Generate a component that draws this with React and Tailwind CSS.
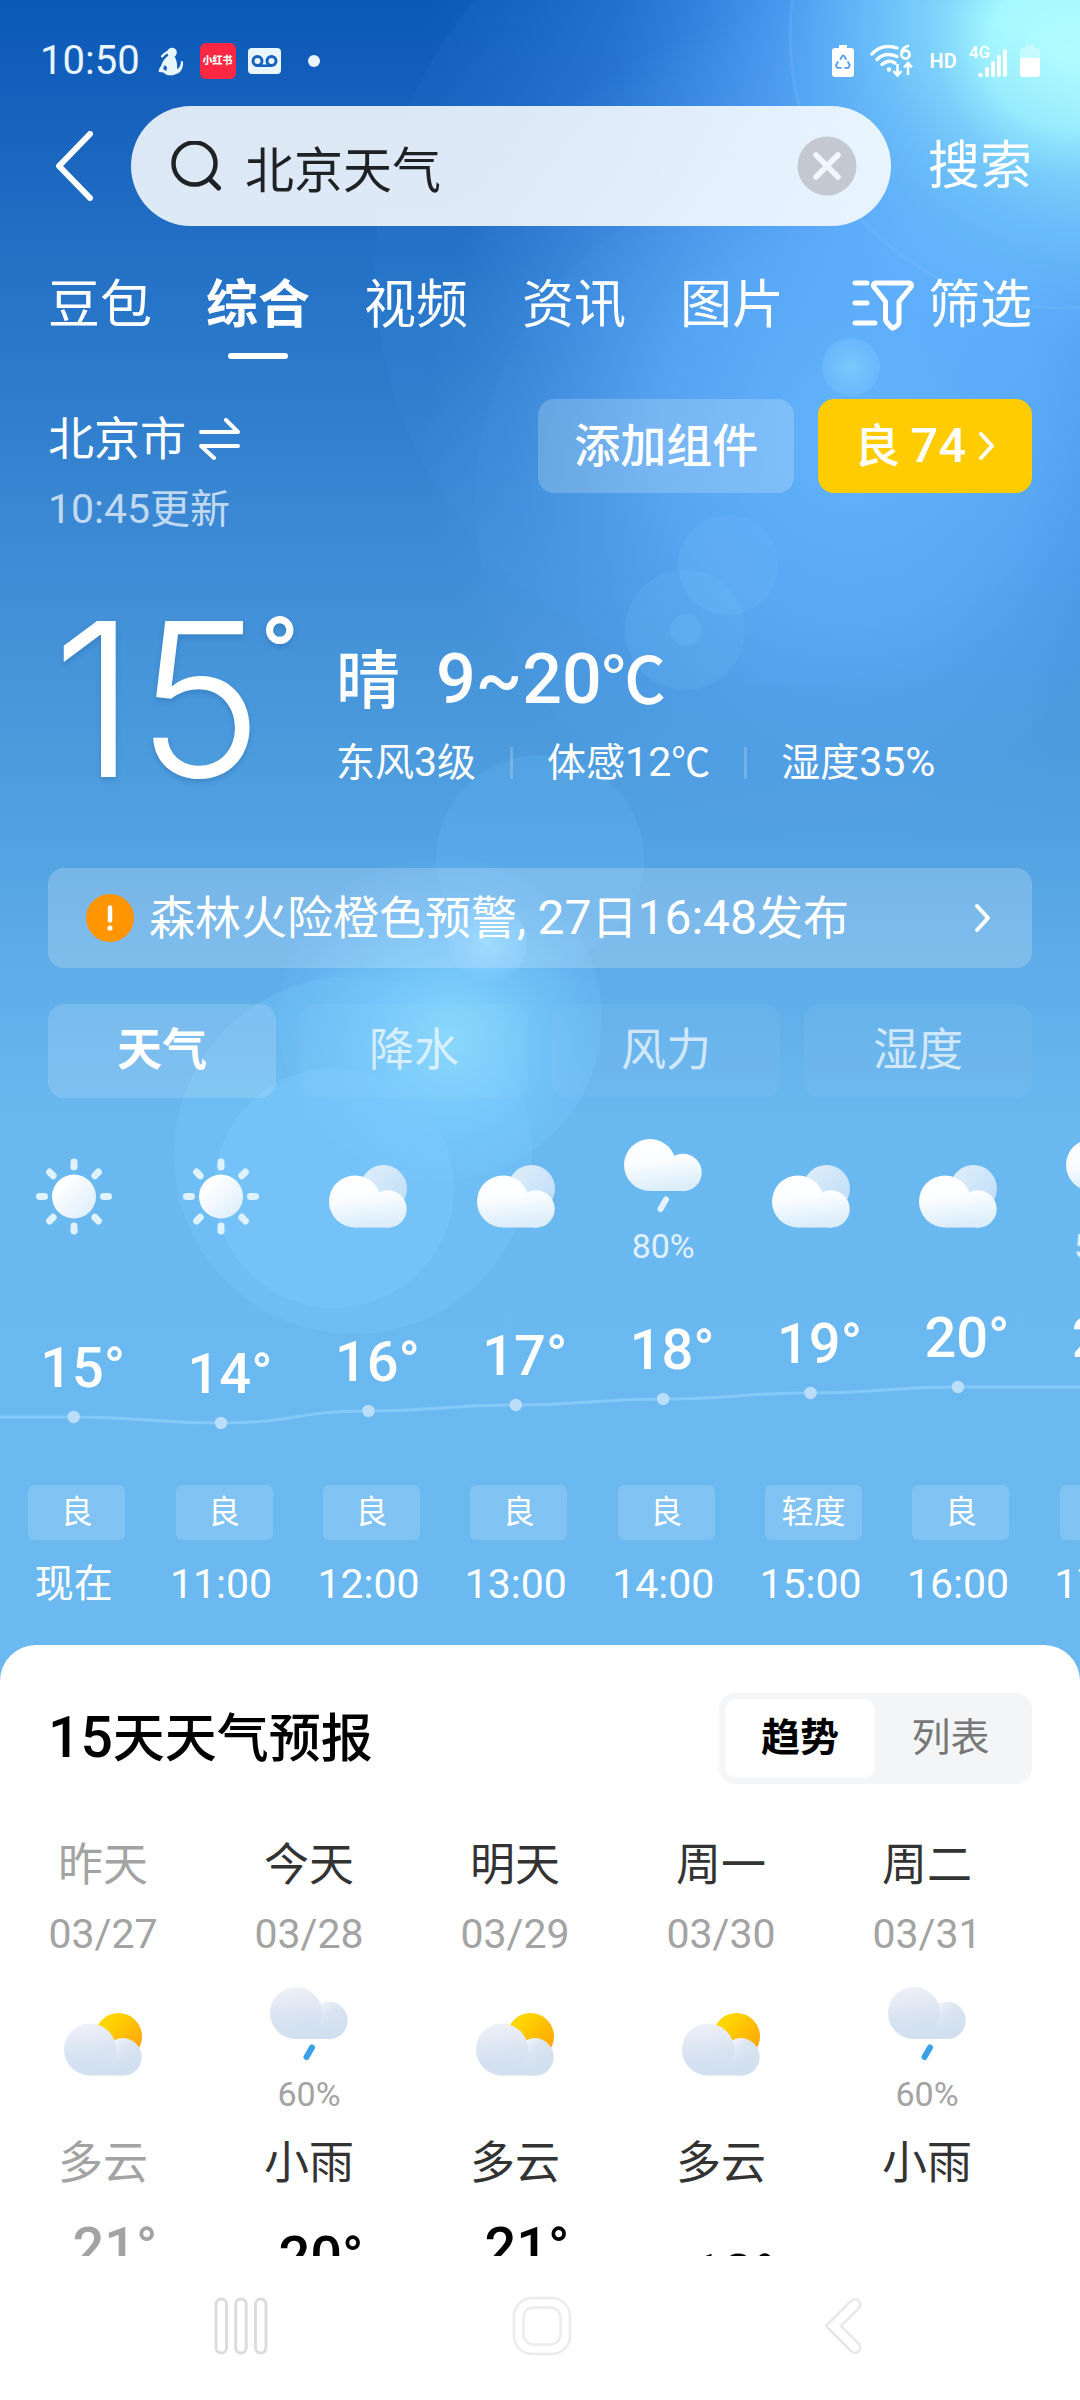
import React from "react";

const hours = [
  { time: "现在", temp: 15, icon: "sun", air: "良" },
  { time: "11:00", temp: 14, icon: "sun", air: "良" },
  { time: "12:00", temp: 16, icon: "cloud", air: "良" },
  { time: "13:00", temp: 17, icon: "cloud", air: "良" },
  { time: "14:00", temp: 18, icon: "rain", rain: "80%", air: "良" },
  { time: "15:00", temp: 19, icon: "cloud", air: "轻度" },
  { time: "16:00", temp: 20, icon: "cloud", air: "良" },
  { time: "17:00", temp: 20, icon: "rain", rain: "50%", air: "良" },
];

const days = [
  { name: "昨天", date: "03/27", icon: "partly", text: "多云", temp: 21, past: true },
  { name: "今天", date: "03/28", icon: "rain", rain: "60%", text: "小雨", temp: 20 },
  { name: "明天", date: "03/29", icon: "partly", text: "多云", temp: 21 },
  { name: "周一", date: "03/30", icon: "partly", text: "多云", temp: 18 },
  { name: "周二", date: "03/31", icon: "rain", rain: "60%", text: "小雨", temp: 16 },
];

function Sky() {
  return (
    <svg
      className="absolute inset-x-0 top-0 w-full"
      viewBox="0 0 1080 1720"
      preserveAspectRatio="xMidYMin slice"
      aria-hidden="true"
    >
      <defs>
        <linearGradient id="sky" x1="0" y1="0" x2="0" y2="1720" gradientUnits="userSpaceOnUse">
          <stop offset="0" stopColor="#0a59b7" />
          <stop offset="0.06" stopColor="#1561bc" />
          <stop offset="0.14" stopColor="#226fc5" />
          <stop offset="0.22" stopColor="#2c7bcb" />
          <stop offset="0.3" stopColor="#3a88d3" />
          <stop offset="0.38" stopColor="#4593d9" />
          <stop offset="0.47" stopColor="#509fdf" />
          <stop offset="0.56" stopColor="#5eace8" />
          <stop offset="0.65" stopColor="#6ab8f0" />
          <stop offset="1" stopColor="#6bb9f0" />
        </linearGradient>
        <radialGradient id="flare" cx="1065" cy="50" r="640" gradientUnits="userSpaceOnUse">
          <stop offset="0" stopColor="#b4ffff" />
          <stop offset="0.12" stopColor="#a8fbff" />
          <stop offset="0.2" stopColor="#88dfff" stopOpacity="0.95" />
          <stop offset="0.32" stopColor="#6dc3ff" stopOpacity="0.9" />
          <stop offset="0.46" stopColor="#58a9ff" stopOpacity="0.75" />
          <stop offset="0.7" stopColor="#4a9cf6" stopOpacity="0.32" />
          <stop offset="1" stopColor="#3c8cf0" stopOpacity="0" />
        </radialGradient>
        <radialGradient id="haze" cx="850" cy="430" r="430" gradientUnits="userSpaceOnUse">
          <stop offset="0" stopColor="#68b7ff" stopOpacity="0.9" />
          <stop offset="0.45" stopColor="#64b4fe" stopOpacity="0.65" />
          <stop offset="0.8" stopColor="#5ba8f4" stopOpacity="0.2" />
          <stop offset="1" stopColor="#5ba8f4" stopOpacity="0" />
        </radialGradient>
        <radialGradient id="glow" cx="450" cy="1040" r="185" gradientUnits="userSpaceOnUse">
          <stop offset="0" stopColor="#8fe0ff" stopOpacity="0.9" />
          <stop offset="0.5" stopColor="#78caff" stopOpacity="0.65" />
          <stop offset="1" stopColor="#70c0ff" stopOpacity="0.05" />
        </radialGradient>
        <radialGradient id="spark">
          <stop offset="0" stopColor="#90dcff" stopOpacity="0.9" />
          <stop offset="1" stopColor="#7cc6ff" stopOpacity="0.55" />
        </radialGradient>
      </defs>
      <rect width="1080" height="1720" fill="url(#sky)" />
      <circle cx="790" cy="270" r="415" fill="#5aa8ff" fillOpacity="0.06" />
      <circle cx="800" cy="500" r="325" fill="#62b0ff" fillOpacity="0.06" />
      <rect width="1080" height="900" fill="url(#flare)" />
      <rect width="1080" height="1000" fill="url(#haze)" />
      <circle cx="1062" cy="36" r="272" fill="#7cc4ff" fillOpacity="0.06" stroke="#8ccaff" strokeOpacity="0.18" strokeWidth="3" />
      <circle cx="851" cy="367" r="29" fill="url(#spark)" fillOpacity="0.65" />
      <circle cx="728" cy="565" r="50" fill="#7cc6ff" fillOpacity="0.17" />
      <circle cx="685" cy="630" r="60" fill="#7cc6ff" fillOpacity="0.15" />
      <circle cx="686" cy="630" r="16" fill="#7cc6ff" fillOpacity="0.22" />
      <circle cx="540" cy="859" r="104" fill="#66b6f6" fillOpacity="0.28" />
      <circle cx="440" cy="1018" r="162" fill="url(#glow)" />
      <circle cx="353" cy="1155" r="179" fill="#7ccbff" fillOpacity="0.26" />
      <circle cx="334" cy="1188" r="120" fill="#7ccaff" fillOpacity="0.4" />
      <circle cx="488" cy="943" r="39" fill="url(#spark)" fillOpacity="0.85" />
    </svg>
  );
}

function CloudShape({ fill }) {
  return (
    <g fill={fill}>
      <circle cx="27" cy="44.5" r="26" />
      <circle cx="60" cy="52" r="18.7" />
      <path d="M27 44h33v26.6H27z" />
    </g>
  );
}

function WeatherIcon({ kind, tone }) {
  const id = React.useId().replace(/[^a-zA-Z0-9]/g, "");
  const dark = tone === "dark";
  const lift = kind === "rain" ? -13.5 : 0;
  if (kind === "sun") {
    return (
      <svg width="80" height="80" viewBox="0 0 80 80" className="mt-[23px]" aria-hidden="true">
        <defs>
          <linearGradient id={id} x1="0" y1="0" x2="1" y2="1">
            <stop offset="0.2" stopColor="#fff" />
            <stop offset="1" stopColor="#d9ecfc" />
          </linearGradient>
        </defs>
        <circle cx="40" cy="39.5" r="22" fill={`url(#${id})`} />
        {[0, 45, 90, 135, 180, 225, 270, 315].map((a) => (
          <rect key={a} x="36.5" y="1.500" width="7" height="12" rx="3.4" fill="#dff2ff" transform={`rotate(${a} 40 39.5)`} />
        ))}
      </svg>
    );
  }
  return (
    <svg
      width="80"
      height="80"
      viewBox="0 0 80 80"
      className={kind === "rain" ? "mt-0" : "mt-[23px]"}
      aria-hidden="true"
    >
      <defs>
        <linearGradient id={id} x1="0" y1="20" x2="6" y2="72" gradientUnits="userSpaceOnUse">
          <stop offset="0" stopColor={dark ? "#f0f1f9" : "#ffffff"} />
          <stop offset={dark ? "0.6" : "0.45"} stopColor={dark ? "#d8e3f1" : "#fbfdff"} />
          <stop offset="1" stopColor={dark ? "#d1dfef" : "#dceefb"} />
        </linearGradient>
        <linearGradient id={`${id}b`} x1="34" y1="12" x2="78" y2="52" gradientUnits="userSpaceOnUse">
          <stop offset="0.2" stopColor={dark ? "#ffd500" : "#d9ebfa"} />
          <stop offset="1" stopColor={dark ? "#ff9d0a" : "#bcdcf7"} />
        </linearGradient>
        <linearGradient id={`${id}c`} x1="50" y1="40" x2="72" y2="50" gradientUnits="userSpaceOnUse">
          <stop offset="0" stopColor="#f2f5fb" stopOpacity="0.95" />
          <stop offset="1" stopColor="#d3e0f0" stopOpacity="0" />
        </linearGradient>
        <linearGradient id={`${id}d`} x1="0" y1="34" x2="0" y2="66" gradientUnits="userSpaceOnUse">
          <stop offset="0" stopColor="#fff" />
          <stop offset="1" stopColor="#000" />
        </linearGradient>
        <mask id={`${id}m`}>
          <rect width="80" height="80" fill={`url(#${id}d)`} />
          <circle cx="27" cy="44.5" r="26" fill="#000" />
        </mask>
      </defs>
      {kind !== "rain" && <circle cx="55.5" cy="31.5" r="23.5" fill={`url(#${id}b)`} />}
      <g transform={`translate(0 ${lift})`}>
        <CloudShape fill={`url(#${id})`} />
        {dark && <circle cx="60" cy="52" r="18.7" fill={`url(#${id}c)`} mask={`url(#${id}m)`} />}
      </g>
      {kind === "rain" && (
        <path d="M43 65.5L37.5 75" stroke={dark ? "#3aa0e8" : "#e3f3ff"} strokeWidth="6" strokeLinecap="round" />
      )}
    </svg>
  );
}

function Chevron({ className }) {
  return (
    <svg width="18" height="30" viewBox="0 0 18 30" fill="none" className={className} aria-hidden="true">
      <path d="M3 3l11 12L3 27" stroke="currentColor" strokeWidth="4" strokeLinecap="round" strokeLinejoin="round" />
    </svg>
  );
}

function StatusBar() {
  return (
    <div className="flex h-[106px] items-center justify-between pt-4 pr-10 pl-10 text-[#e9f5ff]">
      <div className="flex items-center">
        <span className="text-[40px] leading-[48px]">10:50</span>
        <svg width="26" height="30" viewBox="0 0 26 30" className="ml-[18px]" aria-hidden="true">
          <circle cx="14" cy="6.5" r="4.8" fill="currentColor" />
          <path d="M11 5.500C8 6 6 8 4 10.500" stroke="currentColor" strokeWidth="2.2" strokeLinecap="round" fill="none" />
          <path
            d="M10.500 9.500c-3.500 2.500-6 5.500-7 9.500-1 2-3.500 5-2.500 7l4.500.5c2.500 3.500 9.500 3.500 12.500 1.500 5-1 7.500-6 7-12.500l-2-.5c0 4-1.500 7-4 8 .5-5-.5-10-3-13.500z"
            fill="currentColor"
          />
          <path d="M6.500 19l2.500 2-.5 4-3.500-2z" fill="#1561bc" />
        </svg>
        <span className="ml-4 flex size-9 items-center justify-center rounded-md bg-[#ff2741] text-[10px] leading-none font-black text-white">
          小红书
        </span>
        <svg width="33" height="26" viewBox="0 0 33 26" fill="none" className="ml-3" aria-hidden="true">
          <rect width="33" height="26" rx="4" fill="currentColor" />
          <circle cx="9.5" cy="13" r="4.5" stroke="#1561bc" strokeWidth="3" />
          <circle cx="23.5" cy="13" r="4.5" stroke="#1561bc" strokeWidth="3" />
          <path d="M9.5 17.700h14" stroke="#1561bc" strokeWidth="2.6" />
        </svg>
        <span className="ml-[27px] size-3 rounded-full bg-[#e9f5ff]" />
      </div>
      <div className="flex items-center text-white">
        <svg width="22" height="32" viewBox="0 0 22 32" aria-hidden="true">
          <path d="M7 0h8v3h4a3 3 0 013 3v23a3 3 0 01-3 3H3a3 3 0 01-3-3V6a3 3 0 013-3h4z" fill="currentColor" />
          <g fill="none" stroke="#4f9cf5" strokeWidth="1.8" strokeLinecap="round" strokeLinejoin="round">
            <path d="M8.5 14l2-3.4h1.4L14 14" />
            <path d="M16 17l1.8 3.4-1.4 2.4H13" />
            <path d="M9 22.800H5.200L4 20.500 5.800 17" />
          </g>
        </svg>
        <svg width="44" height="34" viewBox="0 0 44 34" fill="none" stroke="currentColor" className="ml-4" aria-hidden="true">
          <path d="M2 10C9 2 19 1 27 4" strokeWidth="3.400" strokeLinecap="round" />
          <path d="M7 15.500c5-5 12-6.500 20-3" strokeWidth="3.400" strokeLinecap="round" />
          <path d="M12 20.500c4-3.500 9-4 13-1.500" strokeWidth="3.400" strokeLinecap="round" />
          <circle cx="19" cy="25.500" r="2.200" fill="currentColor" stroke="none" />
          <path d="M38 2c-4 1-6.500 4-6.500 8" strokeWidth="2.800" strokeLinecap="round" />
          <circle cx="35.500" cy="10.500" r="4" strokeWidth="2.800" />
          <path d="M27.500 20v11m-4-4l4 4.500 4-4.500M38 31V19m-4 4.500l4-4.500 4 4.500" strokeWidth="2.600" />
        </svg>
        <span className="ml-4 text-[20px] leading-none font-semibold">HD</span>
        <span className="ml-3 self-start text-[17px] leading-none font-semibold">4G</span>
        <svg width="30" height="30" viewBox="0 0 30 30" fill="currentColor" className="-ml-3 mt-1" aria-hidden="true">
          <circle cx="2.500" cy="27" r="2.200" />
          <rect x="7" y="19" width="4" height="10" rx="2" />
          <rect x="13" y="13" width="4" height="16" rx="2" />
          <rect x="19" y="7" width="4" height="22" rx="2" />
          <rect x="25" y="1" width="4" height="28" rx="2" />
        </svg>
        <svg width="20" height="32" viewBox="0 0 20 32" className="ml-3" aria-hidden="true">
          <path d="M6 0h8v3h3a3 3 0 013 3v7H0V6a3 3 0 013-3h3z" fill="currentColor" fillOpacity="0.35" />
          <path d="M0 13h20v16a3 3 0 01-3 3H3a3 3 0 01-3-3z" fill="currentColor" />
        </svg>
      </div>
    </div>
  );
}

function SearchRow() {
  return (
    <form className="flex h-[120px] items-center gap-[37px] pr-12 pl-14" onSubmit={(e) => e.preventDefault()}>
      <button type="button" aria-label="返回" className="shrink-0 text-white">
        <svg width="38" height="70" viewBox="0 0 38 70" fill="none" aria-hidden="true">
          <path d="M34 3L3 35l31 32" stroke="currentColor" strokeWidth="6" strokeLinecap="round" strokeLinejoin="round" />
        </svg>
      </button>
      <div className="flex h-full min-w-0 flex-1 items-center rounded-full bg-white/85 pr-[34px] pl-10">
        <svg width="50" height="50" viewBox="0 0 50 50" fill="none" stroke="#1f2225" className="shrink-0" aria-hidden="true">
          <circle cx="23.500" cy="22.500" r="21" strokeWidth="4.500" />
          <path d="M39 38.500l8.500 8.500" strokeWidth="5" strokeLinecap="round" />
        </svg>
        <input
          aria-label="搜索内容"
          defaultValue="北京天气"
          className="ml-6 h-full min-w-0 flex-1 bg-transparent text-[49px] leading-[60px] text-[#1f2225] outline-none"
        />
        <button type="button" aria-label="清除" className="shrink-0">
          <svg width="60" height="60" viewBox="0 0 60 60" fill="none" aria-hidden="true">
            <circle cx="30" cy="30" r="29.500" fill="#c3c8d1" />
            <path d="M19 19l22 22M41 19L19 41" stroke="#f0f7ff" strokeWidth="5.500" strokeLinecap="round" />
          </svg>
        </button>
      </div>
      <button type="submit" className="shrink-0 pt-0.5 text-[52px] leading-[60px] text-white">搜索</button>
    </form>
  );
}

function Tabs() {
  const tabs = ["豆包", "综合", "视频", "资讯", "图片"];
  return (
    <nav className="flex items-start justify-between px-12 pt-[50px] text-[52px] leading-[60px] text-white">
      <div className="flex gap-[54px]">
        {tabs.map((t) => (
          <button key={t} type="button" className="flex flex-col items-center gap-[17px]">
            <span className={t === "综合" ? "font-bold" : "font-normal"}>{t}</span>
            <span className={t === "综合" ? "h-1.5 w-[60px] rounded-full bg-white" : "h-1.5 w-[60px]"} />
          </button>
        ))}
      </div>
      <button type="button" className="flex items-center gap-[14px]">
        <svg width="62" height="52" viewBox="0 0 62 52" fill="none" stroke="currentColor" strokeWidth="5" strokeLinecap="round" strokeLinejoin="round" aria-hidden="true">
          <path d="M3 3h12M3 23h12M3 43h20" />
          <path d="M24 3h33c2.500 0 3 2.500 2 4L47 21.500V42c0 2-1 3-2.500 4l-3 1.800c-1 .5-2 0-2.500-.8L34.500 42c-.8-1-1-2-1-3V21.500L22 7c-1.200-1.500-.5-4 2-4z" />
        </svg>
        筛选
      </button>
    </nav>
  );
}

function Current() {
  return (
    <section className="px-12 text-white">
      <div className="mt-10 flex items-start justify-between">
        <div className="pt-3">
          <button type="button" className="flex items-center gap-[13px] text-[46px] leading-[56px]">
            北京市
            <svg width="41" height="42" viewBox="0 0 41 42" fill="none" stroke="currentColor" strokeWidth="4" strokeLinecap="round" strokeLinejoin="round" aria-hidden="true">
              <path d="M2 14h37L27 2M39 28H2l13 12" />
            </svg>
          </button>
          <p className="mt-4 text-[40px] leading-[52px] text-white/70">
            <span className="text-[41px]">10:45</span>更新
          </p>
        </div>
        <div className="flex gap-6 text-[46px] font-medium">
          <button type="button" className="h-[94px] rounded-2xl bg-white/20 px-9">添加组件</button>
          <button type="button" className="flex h-[94px] items-center rounded-2xl bg-[#fecc00] px-9">
            <span>良</span>
            <span className="ml-2.5 text-[49px]">74</span>
            <Chevron className="ml-3" />
          </button>
        </div>
      </div>

      <div className="mt-[86px] flex items-start">
        <p className="flex w-[288px] shrink-0 items-start pl-1 font-['Inter'] text-[214px] leading-[156px] font-light whitespace-nowrap [text-shadow:0_3px_5px_rgba(30,90,150,0.3)]">
          15
          <span className="-ml-1 font-['Roboto'] text-[107px] leading-[72px] font-medium">°</span>
        </p>
        <div className="pt-[17px]">
          <p className="flex items-baseline gap-9 text-[64px] leading-[80px] font-medium">
            <span>晴</span>
            <span><span className="text-[70px]">9~20</span>℃</span>
          </p>
          <ul className="mt-4 flex items-center gap-[34px] text-[39px] leading-[48px]">
            <li>东风<span className="text-[41px]">3</span>级</li>
            <li aria-hidden="true" className="h-8 w-[3px] bg-white/20" />
            <li>体感<span className="text-[41px]">12</span>℃</li>
            <li aria-hidden="true" className="h-8 w-[3px] bg-white/20" />
            <li>湿度<span className="text-[41px]">35%</span></li>
          </ul>
        </div>
      </div>

      <a href="#alert" className="mt-[81px] flex h-[100px] items-center rounded-2xl bg-white/20 pr-10 pl-[38px] text-[46px] leading-[56px]">
        <span className="flex size-12 shrink-0 items-center justify-center rounded-full bg-[#ff9500]">
          <svg width="8" height="26" viewBox="0 0 8 26" fill="none" aria-hidden="true">
            <path d="M4 2.500v13" stroke="#fff" strokeWidth="4.500" strokeLinecap="round" />
            <circle cx="4" cy="23" r="2.600" fill="#fff" />
          </svg>
        </span>
        <span className="ml-[15px] flex-1">
          森林火险橙色预警, <span className="text-[48px]">27</span>日<span className="text-[48px]">16:48</span>发布
        </span>
        <Chevron />
      </a>

      <div className="mt-9 grid grid-cols-4 gap-6 text-[45px]">
        {["天气", "降水", "风力", "湿度"].map((t, i) => (
          <button
            key={t}
            type="button"
            className={
              i === 0
                ? "h-[94px] rounded-2xl bg-white/15 font-bold text-white"
                : "h-[94px] rounded-2xl bg-white/[0.04] text-white/70"
            }
          >
            {t}
          </button>
        ))}
      </div>
    </section>
  );
}

const HOUR_W = 1179 / 8;
const dotY = (t) => 119 + (20 - t) * 6;

function trendPath() {
  const pts = hours.map((h, i) => [HOUR_W * (i + 0.5), dotY(h.temp)]);
  let d = `M0 ${pts[0][1]}L${pts[0][0]} ${pts[0][1]}`;
  for (let i = 1; i < pts.length; i++) {
    const mid = (pts[i - 1][0] + pts[i][0]) / 2;
    d += `C${mid} ${pts[i - 1][1]} ${mid} ${pts[i][1]} ${pts[i][0]} ${pts[i][1]}`;
  }
  return d;
}

function Hourly() {
  return (
    <section className="overflow-hidden pt-9 pb-[37px] text-white">
      <div className="relative w-[1179px]">
        <svg className="absolute top-[134px] left-0 h-[217px] w-full" viewBox="0 0 1179 217" fill="none" aria-hidden="true">
          <path d={trendPath()} stroke="#84c9f8" strokeWidth="3" />
          {hours.map((h, i) => (
            <circle key={h.time} cx={HOUR_W * (i + 0.5)} cy={dotY(h.temp)} r="6.200" fill="#badefa" />
          ))}
        </svg>
        <ol className="relative grid grid-cols-8">
          {hours.map((h) => (
            <li key={h.time} className="flex flex-col items-center">
              <div className="flex h-[134px] flex-col items-center">
                <WeatherIcon kind={h.icon} tone="light" />
                {h.rain && <span className="mt-3 text-[34px] leading-[40px] text-white/80">{h.rain}</span>}
              </div>
              <div className="h-[217px]">
                <p
                  className="pl-[18px] text-[56px] leading-[60px] font-medium"
                  style={{ marginTop: 40 + (20 - h.temp) * 6 }}
                >
                  {h.temp}°
                </p>
              </div>
              <span className="ml-1.5 flex h-[55px] w-[97px] items-center justify-center rounded-md bg-white/15 text-[32px] leading-[51px]">
                {h.air}
              </span>
              <span className={h.time === "现在" ? "mt-5 text-[39px] leading-[48px]" : "mt-5 text-[41px] leading-[48px]"}>
                {h.time}
              </span>
            </li>
          ))}
        </ol>
      </div>
    </section>
  );
}

function Forecast() {
  return (
    <section className="relative rounded-t-[36px] bg-white pt-12">
      <div className="flex items-center justify-between px-12">
        <h2 className="text-[52px] leading-[64px] font-medium text-black">
          <span className="text-[57px]">15</span>天天气预报
        </h2>
        <div className="flex h-[91px] rounded-2xl bg-[#f4f5f7] p-1.5 text-[39px]">
          <button type="button" className="w-[150px] rounded-xl bg-white font-bold text-black">趋势</button>
          <button type="button" className="w-[151px] text-[#777777]">列表</button>
        </div>
      </div>
      <ol className="mt-[54px] flex">
        {days.map((d) => (
          <li
            key={d.date}
            className={
              d.past
                ? "flex w-[206px] shrink-0 flex-col items-center text-[#a3a3a3]"
                : "flex w-[206px] shrink-0 flex-col items-center text-[#333333]"
            }
          >
            <span className="text-[45px] leading-[56px]">{d.name}</span>
            <span className="mt-4 text-[41px] leading-[48px] text-[#a3a3a3]">{d.date}</span>
            <div className="mt-6 flex h-[134px] flex-col items-center">
              <WeatherIcon kind={d.icon} tone="dark" />
              {d.rain && <span className="mt-3 text-[34px] leading-[40px] text-[#a3a3a3]">{d.rain}</span>}
            </div>
            <span className="mt-5 text-[45px] leading-[56px]">{d.text}</span>
            <span
              className={
                d.past
                  ? "pl-6 text-[56px] leading-[60px] font-medium"
                  : "pl-6 text-[56px] leading-[60px] font-medium text-black"
              }
              style={{ marginTop: 26 + (21 - d.temp) * 9 }}
            >
              {d.temp}°
            </span>
          </li>
        ))}
      </ol>
    </section>
  );
}

function SystemNav() {
  return (
    <nav className="grid h-36 shrink-0 grid-cols-3 items-center bg-white pr-[86px] pb-1 pl-[90px]">
      <button type="button" aria-label="最近任务" className="flex justify-center">
        <svg width="54" height="58" viewBox="0 0 54 58" fill="none" stroke="#dcdcdc" strokeWidth="3" aria-hidden="true">
          <rect x="2" y="2" width="10.500" height="54" rx="5.200" />
          <rect x="21.700" y="2" width="10.500" height="54" rx="5.200" />
          <rect x="41.500" y="2" width="10.500" height="54" rx="5.200" />
        </svg>
      </button>
      <button type="button" aria-label="主屏幕" className="flex justify-center">
        <svg width="60" height="60" viewBox="0 0 60 60" fill="none" stroke="#ececec" strokeWidth="2.500" aria-hidden="true">
          <rect x="2" y="2" width="56" height="56" rx="18" />
          <rect x="11.500" y="11.500" width="37" height="37" rx="10" />
        </svg>
      </button>
      <button type="button" aria-label="返回上一页" className="flex justify-center">
        <svg width="38" height="58" viewBox="0 0 38 58" fill="none" stroke="#e9e9e9" strokeWidth="2.500" strokeLinejoin="round" aria-hidden="true">
          <path d="M2 29L27 4a5 5 0 018 7L17 29l18 18a5 5 0 01-8 7z" />
        </svg>
      </button>
    </nav>
  );
}

export default function App() {
  return (
    <div className="flex h-screen flex-col bg-white font-['Roboto','Noto_Sans_CJK_SC',sans-serif]" lang="zh-CN">
      <main className="relative min-h-0 flex-1 overflow-hidden">
        <Sky />
        <div className="relative">
          <StatusBar />
          <SearchRow />
          <Tabs />
          <Current />
          <Hourly />
          <Forecast />
        </div>
      </main>
      <SystemNav />
    </div>
  );
}
